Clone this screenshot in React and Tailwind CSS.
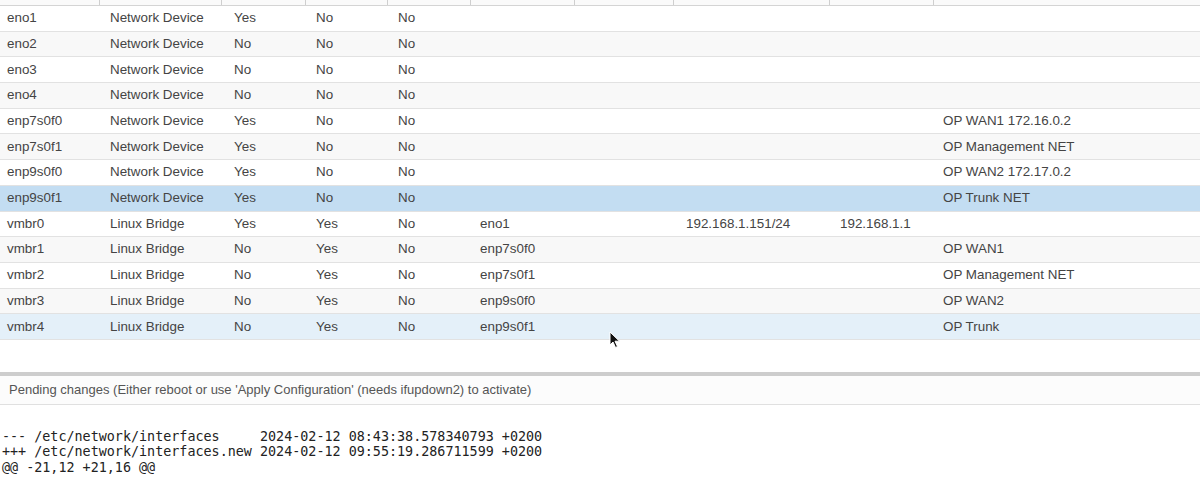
import React from 'react';

const rows = [
    ['eno1', 'Network Device', 'Yes', 'No', 'No', '', '', '', '', ''],
    ['eno2', 'Network Device', 'No', 'No', 'No', '', '', '', '', ''],
    ['eno3', 'Network Device', 'No', 'No', 'No', '', '', '', '', ''],
    ['eno4', 'Network Device', 'No', 'No', 'No', '', '', '', '', ''],
    ['enp7s0f0', 'Network Device', 'Yes', 'No', 'No', '', '', '', '', 'OP WAN1 172.16.0.2'],
    ['enp7s0f1', 'Network Device', 'Yes', 'No', 'No', '', '', '', '', 'OP Management NET'],
    ['enp9s0f0', 'Network Device', 'Yes', 'No', 'No', '', '', '', '', 'OP WAN2 172.17.0.2'],
    ['enp9s0f1', 'Network Device', 'Yes', 'No', 'No', '', '', '', '', 'OP Trunk NET'],
    ['vmbr0', 'Linux Bridge', 'Yes', 'Yes', 'No', 'eno1', '', '192.168.1.151/24', '192.168.1.1', ''],
    ['vmbr1', 'Linux Bridge', 'No', 'Yes', 'No', 'enp7s0f0', '', '', '', 'OP WAN1'],
    ['vmbr2', 'Linux Bridge', 'No', 'Yes', 'No', 'enp7s0f1', '', '', '', 'OP Management NET'],
    ['vmbr3', 'Linux Bridge', 'No', 'Yes', 'No', 'enp9s0f0', '', '', '', 'OP WAN2'],
    ['vmbr4', 'Linux Bridge', 'No', 'Yes', 'No', 'enp9s0f1', '', '', '', 'OP Trunk'],
];

const diff = [
    '--- /etc/network/interfaces     2024-02-12 08:43:38.578340793 +0200',
    '+++ /etc/network/interfaces.new 2024-02-12 09:55:19.286711599 +0200',
    '@@ -21,12 +21,16 @@',
];

const rowBg = (i) => {
    if (i === 7) return 'bg-[#c3ddf2]';
    if (i === 12) return 'bg-[#e4f0f9]';
    return i % 2 === 1 ? 'bg-[#f8f8f8]' : 'bg-white';
};

export default function App() {
    return (
        <div className="w-[1200px] h-[478px] bg-white overflow-hidden relative text-[#444]" style={{ fontFamily: '"Liberation Sans", Arial, sans-serif' }}>
            {/* grid header, mostly scrolled off */}
            <div className="grid grid-cols-[100px_122px_84px_82px_83px_104px_99px_156px_104px_1fr] h-[6px] border-b border-[#d4d4d4] bg-[#fafafa]">
                {Array.from({ length: 10 }).map((_, i) => (
                    <div key={i} className={i < 9 ? 'border-r border-[#cfcfcf]' : ''} />
                ))}
            </div>

            <div className="flex flex-col">
                {rows.map((r, i) => (
                    <div key={i} className={`grid grid-cols-[103px_124px_82px_82px_82px_103px_103px_154px_103px_1fr] h-[25.7px] items-center border-b border-[#e2e2e2] text-[13.4px] ${rowBg(i)}`}>
                        {r.map((c, j) => (
                            <div key={j} className="pl-[7px] whitespace-nowrap overflow-hidden">{c}</div>
                        ))}
                    </div>
                ))}
            </div>

            <div className="h-[32px]" />

            {/* splitter */}
            <div className="h-[4px] bg-[#cdcdcd]" />

            <div className="h-[29px] flex items-center pl-[9px] text-[13px] text-[#555] bg-[#fcfcfc] border-b border-[#e0e0e0]">
                Pending changes (Either reboot or use 'Apply Configuration' (needs ifupdown2) to activate)
            </div>

            <pre className="pt-[24px] pl-[2px] text-[13.4px] leading-[15.5px] text-[#222]" style={{ fontFamily: '"DejaVu Sans Mono", monospace' }}>
                {diff.join('\n')}
            </pre>

            {/* mouse pointer */}
            <svg className="absolute left-[609px] top-[331px]" width="12" height="18" viewBox="0 0 12 18">
                <path d="M1 1 L1 14 L4 11 L6.5 16.5 L8.5 15.5 L6 10.2 L10.5 10.2 Z" fill="#111" stroke="#fff" strokeWidth="1" />
            </svg>
        </div>
    );
}
